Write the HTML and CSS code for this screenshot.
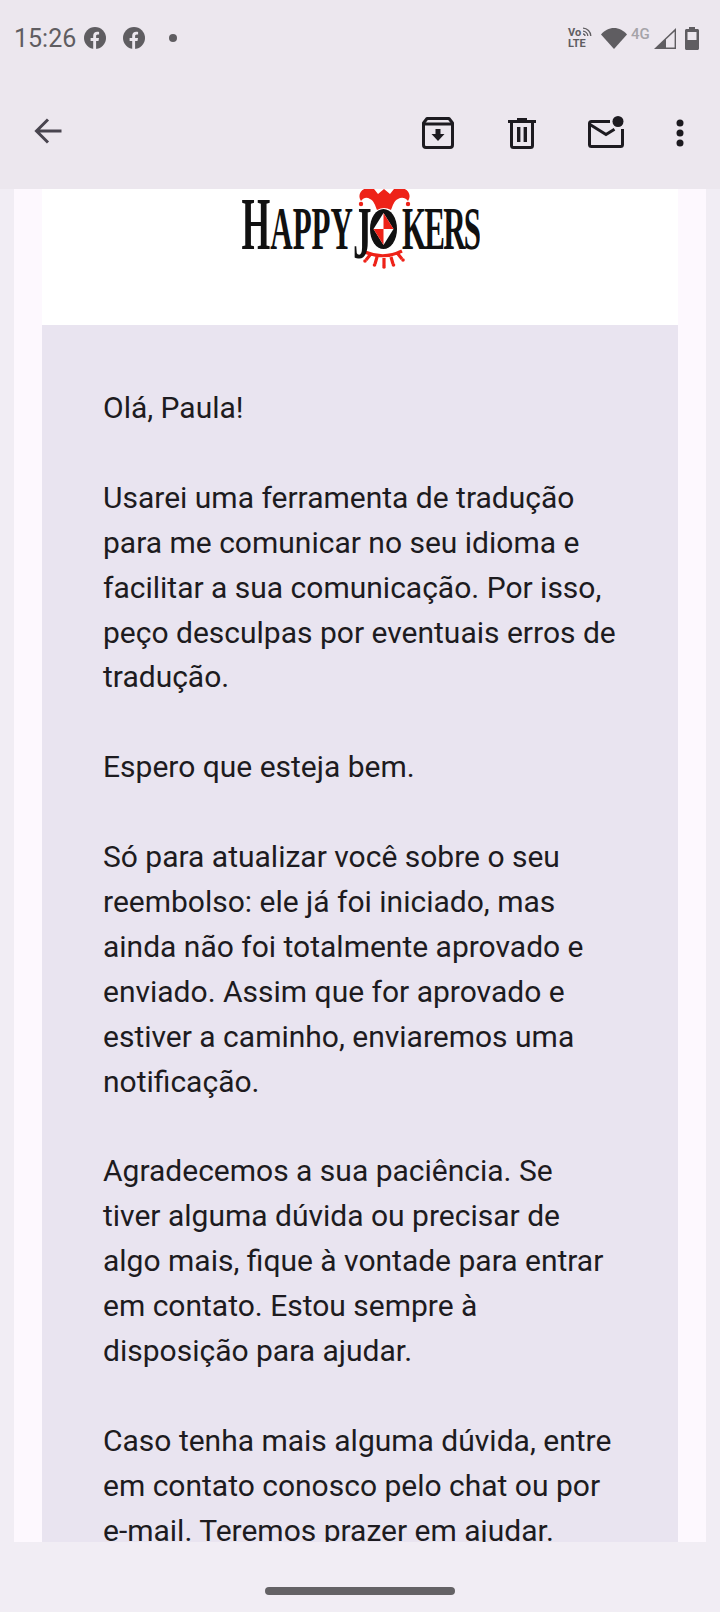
FILE: index.html
```html
<!DOCTYPE html>
<html lang="pt">
<head>
<meta charset="utf-8" />
<title>Happy Jokers</title>
<link rel="stylesheet" href="styles.css">
</head>
<body>
<header class="top">
	<div class="status">
		<div class="status-left">
			<span class="time">15:26</span>
			<svg class="fb" viewBox="0 0 22 22"><circle cx="11" cy="11" r="11" fill="#5f5d61"/><path d="M9.2 22v-8H6.6v-3h2.6V8.8c0-2.7 1.6-4.1 4-4.1.9 0 1.9.2 1.9.2v2.6h-1.3c-1.3 0-1.7.8-1.7 1.6V11h2.9l-.5 3h-2.4v8z" fill="#ece7ee"/></svg>
			<svg class="fb fb-two" viewBox="0 0 22 22"><circle cx="11" cy="11" r="11" fill="#5f5d61"/><path d="M9.2 22v-8H6.6v-3h2.6V8.8c0-2.7 1.6-4.1 4-4.1.9 0 1.9.2 1.9.2v2.6h-1.3c-1.3 0-1.7.8-1.7 1.6V11h2.9l-.5 3h-2.4v8z" fill="#ece7ee"/></svg>
			<span class="dot"></span>
		</div>
		<div class="status-right">
			<div class="volte">
				<span class="vo">Vo</span>
				<svg class="vo-waves" viewBox="0 0 10 10"><path d="M1 1.2c4.200 0 7.800 3.600 7.800 7.800M1 4.200c2.600 0 4.800 2.200 4.800 4.800M1 7c1.100 0 2 .9 2 2" fill="none" stroke="#5f5d61" stroke-width="1.300"/></svg>
				<span class="lte">LTE</span>
			</div>
			<svg class="wifi" viewBox="0 0 26 21"><path d="M0 6.500C3.400 2.500 8 0 13 0s9.600 2.500 13 6.500L13 21z" fill="#5f5d61"/></svg>
			<span class="net">4G</span>
			<svg class="signal" viewBox="0 0 22 21"><path d="M0 21 22 0v21z" fill="#5f5d61"/><path d="M12 19.600h8.600V3.400L12 11.600z" fill="#ece7ee"/></svg>
			<svg class="battery" viewBox="0 0 14 23"><path d="M4 0h6v2h2.500c.8 0 1.500.7 1.500 1.500v18c0 .8-.7 1.500-1.500 1.500h-11C.7 23 0 22.300 0 21.500v-18C0 2.700.7 2 1.500 2H4z" fill="#5f5d61"/><rect x="2.500" y="5" width="9" height="8" fill="#ece7ee"/></svg>
		</div>
	</div>
	<div class="toolbar">
		<svg class="ic-back" viewBox="0 0 28 28"><path d="M27.500 14H3M14 2.500 2.500 14 14 25.500" fill="none" stroke="#49454f" stroke-width="3"/></svg>
		<div class="actions">
			<svg class="ic-archive" viewBox="0 0 32 32"><path d="M5 1.500h22l3.500 4.500v22c0 1.400-1 2.500-2.500 2.500H4c-1.400 0-2.500-1.100-2.500-2.500V6z" fill="none" stroke="#1d1b20" stroke-width="3" stroke-linejoin="round"/><path d="M2 7h28" stroke="#1d1b20" stroke-width="3"/><path d="M13.500 12h5v5h4L16 24l-6.500-7h4z" fill="#1d1b20"/></svg>
			<svg class="ic-trash" viewBox="0 0 28 32"><path d="M9 1h10v2h9v3H0V3h9z" fill="#1d1b20"/><path d="M3.500 5v23.500c0 1.100.9 2 2 2h17c1.100 0 2-.9 2-2V5" fill="none" stroke="#1d1b20" stroke-width="3"/><path d="M9 10h3.400v15H9zM15.600 10H19v15h-3.400z" fill="#1d1b20"/></svg>
			<svg class="ic-mail" viewBox="0 0 36 32"><path d="M22 5.500H3.500c-1.100 0-2 .9-2 2v21c0 1.100.9 2 2 2h29c1.100 0 2-.9 2-2V13" fill="none" stroke="#1d1b20" stroke-width="3"/><path d="M2 8.500l16 10 8.500-5.300" fill="none" stroke="#1d1b20" stroke-width="3"/><circle cx="30" cy="5.500" r="5.500" fill="#1d1b20"/></svg>
			<svg class="ic-more" viewBox="0 0 8 28"><circle cx="4" cy="4" r="3.500" fill="#1d1b20"/><circle cx="4" cy="14" r="3.500" fill="#1d1b20"/><circle cx="4" cy="24" r="3.500" fill="#1d1b20"/></svg>
		</div>
	</div>
</header>

<main class="content">
	<div class="mail-card">
		<div class="logo-box">
			<svg class="logo" viewBox="0 0 240 82">
				<!-- jester hat, crown and card emblem -->
				<path d="M121 12C117 6 121-1 129-1L134 0 138 5 144 0 150 5 154 0 160-1C168-1 172 6 168 12C165 8 161 8 158 10C154 12 153 16 151 21Q144 17 137 21C135 16 134 12 130 10C127 8 124 8 121 12z" fill="#ee2218"/>
				<circle cx="121" cy="15" r="2.200" fill="#ee2218"/>
				<circle cx="168" cy="15" r="2.200" fill="#ee2218"/>
				<path d="M125 63Q144 71 162 62M130 66l-4 5M137 68l-2 7M144 69v8M151 68l2 7M158 65l4 5" fill="none" stroke="#ee2218" stroke-width="3.200"/>
				<circle cx="125" cy="72" r="1.800" fill="#ee2218"/>
				<circle cx="134.500" cy="76" r="1.800" fill="#ee2218"/>
				<circle cx="144" cy="78" r="1.800" fill="#ee2218"/>
				<circle cx="153.500" cy="76" r="1.800" fill="#ee2218"/>
				<circle cx="163" cy="71" r="1.800" fill="#ee2218"/>
				<ellipse cx="143.500" cy="40" rx="13.500" ry="20" fill="#111"/>
				<path d="M143.500 24 153.500 40 143.500 56 133.500 40z" fill="#fff"/>
				<path d="M143.500 24 153.500 40H143.500zM143.500 56 133.500 40H143.500z" fill="#ee2218"/>
				<text class="logo-text" transform="translate(1.500 60) scale(.5 1)">H<tspan class="logo-small">APPY</tspan><tspan dy="9">J</tspan><tspan class="logo-small kers" dx="61" dy="-9">KERS</tspan></text>
			</svg>
		</div>
		<div class="message">
			<p>Olá, Paula!</p>
			<p>Usarei uma ferramenta de tradução<br>para me comunicar no seu idioma e<br>facilitar a sua comunicação. Por isso,<br>peço desculpas por eventuais erros de<br>tradução.</p>
			<p>Espero que esteja bem.</p>
			<p>Só para atualizar você sobre o seu<br>reembolso: ele já foi iniciado, mas<br>ainda não foi totalmente aprovado e<br>enviado. Assim que for aprovado e<br>estiver a caminho, enviaremos uma<br>notificação.</p>
			<p>Agradecemos a sua paciência. Se<br>tiver alguma dúvida ou precisar de<br>algo mais, fique à vontade para entrar<br>em contato. Estou sempre à<br>disposição para ajudar.</p>
			<p>Caso tenha mais alguma dúvida, entre<br>em contato conosco pelo chat ou por<br>e-mail. Teremos prazer em ajudar.</p>
		</div>
	</div>
</main>

<footer class="nav-bar">
	<span class="home-pill"></span>
</footer>
</body>
</html>
```

FILE: styles.css
```css
html { margin: 0 }
body {

	margin: 0;
	width: 720px;
	height: 1612px;
	overflow: hidden;
	display: flex;
	flex-direction: column;
	background: #f1edf4;
	font-family: Roboto, "Liberation Sans", sans-serif;
	color: #1d1b20;
}

/*

	status bar + toolbar
*/
.top {

	height: 189px;
	flex: none;
	background: #ece7ee;
}

.status {

	height: 76px;
	display: flex;
	justify-content: space-between;
	align-items: center;
	padding: 0 21px 0 14px;
}

.status-left, .status-right {

	display: flex;
	align-items: center;
}

.time {

	font-size: 25px;
	color: #5f5d61;
	width: 70px;
}

.fb {

	width: 22px;
	height: 22px;
}

.fb-two {

	margin-left: 17px;
}

.dot {

	width: 8px;
	height: 8px;
	border-radius: 50%;
	background: #5f5d61;
	margin-left: 24px;
}

.volte {

	width: 25px;
	height: 22px;
	display: grid;
	grid-template-columns: 14px 11px;
	grid-template-rows: 11px 11px;
	font-size: 11px;
	font-weight: 700;
	line-height: 11px;
	color: #5f5d61;
	margin-right: 8px;
}

.vo-waves {

	width: 10px;
	height: 10px;
}

.lte {

	grid-column: 1 / 3;
}

.wifi {

	width: 26px;
	height: 21px;
}

.net {

	font-size: 15px;
	font-weight: 500;
	line-height: 14px;
	color: #a5a3a8;
	width: 23px;
	margin-left: 4px;
	align-self: flex-start;
}

.signal {

	width: 22px;
	height: 21px;
}

.battery {

	width: 14px;
	height: 23px;
	margin-left: 9px;
}

.toolbar {

	height: 113px;
	display: flex;
	justify-content: space-between;
	align-items: flex-start;
	padding: 41px 36px 0 34px;
}

.actions {

	display: flex;
	align-items: flex-start;
}

.ic-back {

	width: 28px;
	height: 28px;
}

.ic-archive {

	width: 32px;
	height: 32px;
}

.ic-trash {

	width: 28px;
	height: 32px;
	margin-left: 54px;
}

.ic-mail {

	width: 36px;
	height: 32px;
	margin-left: 52px;
	margin-top: -1px;
}

.ic-more {

	width: 8px;
	height: 28px;
	margin-left: 52px;
	margin-top: 2px;
}

/*

	mail body, cut off at the bottom
*/
.content {

	height: 1353px;
	flex: none;
	margin: 0 14px;
	padding: 0 28px;
	background: #fdf8fe;
	overflow: hidden;
}

.logo-box {

	height: 136px;
	background: #fff;
	display: flex;
	justify-content: center;
	align-items: flex-start;
}

.logo {

	width: 240px;
	height: 82px;
	overflow: hidden;
}

.logo-text {

	font-family: "Liberation Serif", serif;
	font-size: 74px;
	font-weight: 700;
	fill: #111;
}

.logo-small {

	font-size: 62px;
}

.kers {

	letter-spacing: -3.500px;
}

.message {

	background: #e9e4f0;
	padding: 61px 20px 0 61px;
	font-size: 30px;
	line-height: 44.9px;
	white-space: nowrap;
}

.message p {

	margin: 0 0 44.9px;
}

.nav-bar {

	flex: 1;
	display: flex;
	justify-content: center;
	padding-top: 45px;
}

.home-pill {

	width: 190px;
	height: 8px;
	border-radius: 4px;
	background: #646265;
}
```
